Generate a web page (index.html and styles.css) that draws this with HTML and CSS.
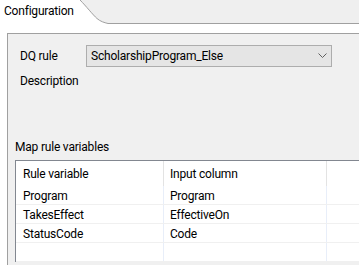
FILE: index.html
```html
<!DOCTYPE html>
<html lang="en">
<head>
  <meta charset="UTF-8">
  <title>Configuration</title>
  <link rel="stylesheet" href="styles.css">
</head>
<body>
  <div class="tabbar">
    <div class="tab">Configuration</div>
    <svg class="tab-curve" width="28" height="24" viewBox="0 0 28 24">
      <path d="M0 0 C6 6, 13 15, 17 18.5 C20.5 21.5, 24 22.5, 28 23.5 L28 24 L0 24 Z" fill="#fff"/>
      <path d="M0 0 C6 6, 13 15, 17 18.5 C20.5 21.5, 24 22.5, 28 23.5" fill="none" stroke="#a0a0a0" stroke-width="1"/>
    </svg>
    <div class="tab-rest"></div>
  </div>

  <div class="page">
    <div class="panel">
      <div class="field-row">
        <label>DQ rule</label>
        <div class="combo">
          <span>ScholarshipProgram_Else</span>
          <svg class="combo-arrow" width="9" height="6" viewBox="0 0 9 6">
            <path d="M0.5 0.5 L4.5 4.5 L8.5 0.5" fill="none" stroke="#606060" stroke-width="1"/>
          </svg>
        </div>
      </div>
      <div class="field-row desc-row">
        <label>Description</label>
      </div>

      <div class="section-title">Map rule variables</div>
      <div class="grid">
        <div class="grid-row head">
          <div class="cell">Rule variable</div>
          <div class="cell">Input column</div>
          <div class="cell"></div>
        </div>
        <div class="grid-row">
          <div class="cell">Program</div>
          <div class="cell">Program</div>
          <div class="cell"></div>
        </div>
        <div class="grid-row">
          <div class="cell">TakesEffect</div>
          <div class="cell">EffectiveOn</div>
          <div class="cell"></div>
        </div>
        <div class="grid-row">
          <div class="cell">StatusCode</div>
          <div class="cell">Code</div>
          <div class="cell"></div>
        </div>
        <div class="grid-row">
          <div class="cell"></div>
          <div class="cell"></div>
          <div class="cell"></div>
        </div>
      </div>
    </div>
  </div>
</body>
</html>
```

FILE: styles.css
```css
body { margin: 0; width: 359px; height: 265px; overflow: hidden; background: #fff; color: #000; font-family: "Segoe UI", Roboto, "Liberation Sans", sans-serif; font-size: 12px; letter-spacing: -0.2px; }

.tabbar { display: flex; height: 24px; background: #efefef; }
.tab { width: 80px; flex: none; box-sizing: border-box; padding: 3px 0 0 4px; line-height: 16px; background: #fff; }
.tab-curve { display: block; flex: none; }
.tab-rest { flex: 1; box-sizing: border-box; border-bottom: 1px solid #a0a0a0; }

.page { height: 241px; box-sizing: border-box; padding: 9px 0 0 7px; background: #fff; }
.panel { height: 100%; box-sizing: border-box; padding-top: 11px; border-top: 1px solid #a0a0a0; border-left: 1px solid #a0a0a0; background: #f0f0f0; }

.field-row { display: flex; align-items: center; height: 22px; padding-left: 12px; }
.field-row label { width: 66px; line-height: 16px; }
.desc-row { height: 16px; margin-top: 6px; }

.combo { display: flex; align-items: center; justify-content: space-between; width: 246px; height: 22px; box-sizing: border-box; padding: 0 4px 0 4px; border: 1px solid #adadad; background: #e5e5e5; }
.combo-arrow { display: block; }

.section-title { margin: 50px 0 0 7px; line-height: 16px; }

.grid { margin: 5px 0 0 7px; border-top: 1px solid #828790; border-left: 1px solid #828790; background: #fff; }
.grid-row { display: grid; grid-template-columns: 148px 163px 1fr; height: 19px; box-sizing: border-box; border-bottom: 1px solid #f0f0f0; }
.grid-row .cell { box-sizing: border-box; padding: 2px 0 0 7px; line-height: 16px; border-right: 1px solid #e8eef9; }
.grid-row .cell:nth-child(2) { padding-left: 6px; }
.grid-row .cell:last-child { border-right: none; }
.grid-row.head { height: 25px; border-bottom: none; }
.grid-row.head .cell { padding-top: 5px; border-right-color: #e3e3e3; }
.grid-row.head .cell:last-child { border-right: none; }
```
